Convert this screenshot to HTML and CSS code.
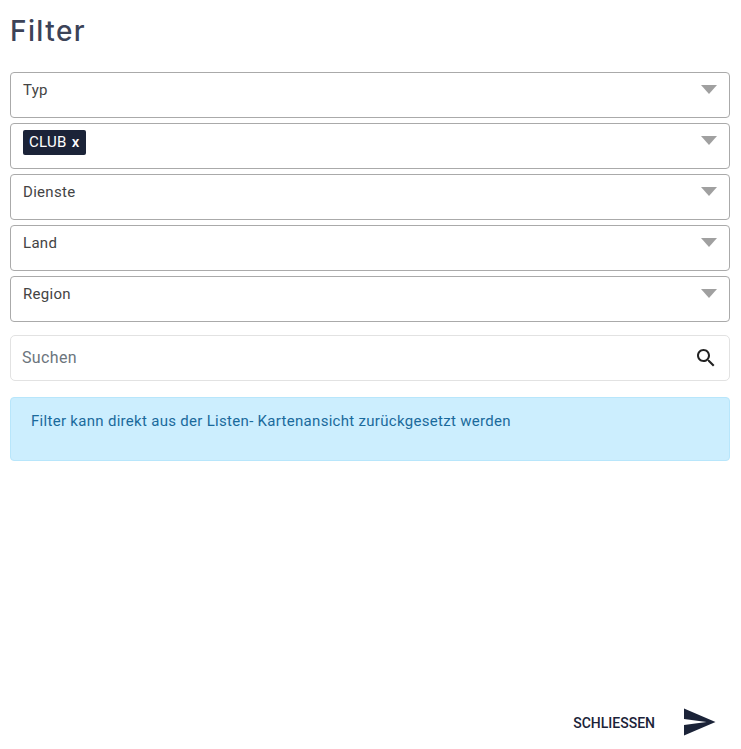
FILE: index.html
```html
<!DOCTYPE html>
<html lang="de">
<head>
    <meta charset="UTF-8">
    <meta name="viewport" content="width=device-width, initial-scale=1.0">
    <title>Filter</title>
    <link rel="stylesheet" href="styles.css">
</head>
<body>

<div class="page">
    <h1>Filter</h1>

    <!-- Select fields -->
    <div class="selects">
        <div class="select"><span>Typ</span><i class="arrow"></i></div>
        <div class="select"><span class="tag">CLUB <b>x</b></span><i class="arrow"></i></div>
        <div class="select"><span>Dienste</span><i class="arrow"></i></div>
        <div class="select"><span>Land</span><i class="arrow"></i></div>
        <div class="select"><span>Region</span><i class="arrow"></i></div>
    </div>

    <!-- Search -->
    <div class="search">
        <span>Suchen</span>
        <svg class="search-icon" viewBox="0 0 24 24" width="24" height="24"><path d="M15.5 14h-.79l-.28-.27C15.41 12.59 16 11.11 16 9.5 16 5.91 13.09 3 9.5 3S3 5.91 3 9.5 5.91 16 9.5 16c1.61 0 3.09-.59 4.23-1.57l.27.28v.79l5 4.99L20.49 19l-4.99-5zm-6 0C7.01 14 5 11.99 5 9.5S7.01 5 9.5 5 14 7.01 14 9.5 11.99 14 9.5 14z"/></svg>
    </div>

    <div class="alert">Filter kann direkt aus der Listen- Kartenansicht zurückgesetzt werden</div>

    <div class="actions">
        <span class="close">SCHLIESSEN</span>
        <svg class="send-icon" viewBox="0 0 24 24" width="36" height="36"><path d="M2.01 21L23 12 2.01 3 2 10l15 2-15 2z"/></svg>
    </div>
</div>

</body>
</html>
```
FILE: styles.css
```css
* {
    margin: 0;
    padding: 0;
    box-sizing: border-box;
}
body {
    font-family: Roboto, "Liberation Sans", sans-serif;
    background-color: #fff;
    color: #333;
}
.page {
    display: flex;
    flex-direction: column;
    height: 749px;
    padding: 0 11px 9px 10px;
}
h1 {
    font-family: Inter, sans-serif;
    font-size: 28px;
    font-weight: 500;
    line-height: 34px;
    letter-spacing: 1.4px;
    color: #3c4358;
    margin-top: 14px;
    margin-bottom: 24px;
}
.selects {
    display: flex;
    flex-direction: column;
    gap: 5px;
}
.select {
    display: flex;
    justify-content: space-between;
    align-items: flex-start;
    height: 46px;
    padding: 8px 12px;
    border: 1px solid #aaa;
    border-radius: 4px;
    font-size: 15px;
    line-height: 18px;
    letter-spacing: 0.3px;
    color: #444;
}
.arrow {
    width: 0;
    height: 0;
    margin-top: 4px;
    border-left: 8px solid transparent;
    border-right: 8px solid transparent;
    border-top: 9px solid #a0a0a0;
}
.tag {
    margin-top: -2px;
    padding: 3px 6px;
    height: 25px;
    background-color: #1b2338;
    border-radius: 2px;
    color: #fff;
    white-space: pre;
}
.tag b {
    font-weight: 500;
    margin-left: 1px;
}
.search {
    display: flex;
    justify-content: space-between;
    align-items: center;
    height: 46px;
    margin-top: 13px;
    padding: 0 11px;
    border: 1px solid #e2e2e2;
    border-radius: 5px;
    font-size: 16px;
    letter-spacing: 0.35px;
    color: #6c757d;
}
.search span {
    margin-top: -2px;
}
.search-icon {
    fill: #222;
}
.alert {
    height: 64px;
    margin-top: 16px;
    padding: 14px 20px;
    background-color: #cceefe;
    border: 1px solid #b8e6fb;
    border-radius: 4px;
    font-size: 15px;
    line-height: 18px;
    letter-spacing: 0.3px;
    color: #1a6a9c;
}
.actions {
    display: flex;
    justify-content: flex-end;
    align-items: center;
    gap: 26px;
    margin-top: auto;
    padding-right: 13px;
}
.close {
    margin-top: 2px;
    font-size: 14px;
    font-weight: 500;
    color: #1b2338;
}
.send-icon {
    fill: #1b2338;
}
```
